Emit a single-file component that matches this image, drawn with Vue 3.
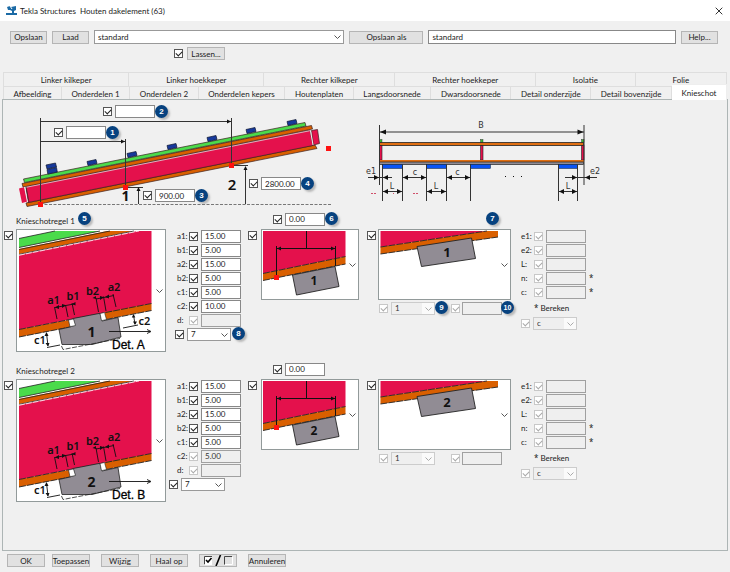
<script setup>
import { reactive } from 'vue'

const topTabs = ['Linker kilkeper', 'Linker hoekkeper', 'Rechter kilkeper', 'Rechter hoekkeper', 'Isolatie', 'Folie']
const bottomTabs = [
  'Afbeelding', 'Onderdelen 1', 'Onderdelen 2', 'Onderdelen kepers', 'Houtenplaten',
  'Langsdoorsnede', 'Dwarsdoorsnede', 'Detail onderzijde', 'Detail bovenzijde', 'Knieschot',
]
const activeTab = 'Knieschot'

const roofFields = reactive([
  { key: 'd2', value: '', badge: 2 },
  { key: 'd1', value: '', badge: 1 },
  { key: 'h1', value: '900.00', badge: 3 },
  { key: 'h2', value: '2800.00', badge: 4 },
])

const blocks = [[92, 163], [132, 155], [172, 147], [212, 139], [251, 131], [292, 123]]

const sections = reactive([
  {
    n: 1, detail: 'Det. A', offset: '0.00',
    fields: [
      { name: 'a1', value: '15.00', on: true },
      { name: 'b1', value: '5.00', on: true },
      { name: 'a2', value: '15.00', on: true },
      { name: 'b2', value: '5.00', on: true },
      { name: 'c1', value: '5.00', on: true },
      { name: 'c2', value: '10.00', on: true },
      { name: 'd', value: '', on: false },
    ],
    badges: true,
  },
  {
    n: 2, detail: 'Det. B', offset: '0.00',
    fields: [
      { name: 'a1', value: '15.00', on: true },
      { name: 'b1', value: '5.00', on: true },
      { name: 'a2', value: '15.00', on: true },
      { name: 'b2', value: '5.00', on: true },
      { name: 'c1', value: '5.00', on: true },
      { name: 'c2', value: '5.00', on: false },
      { name: 'd', value: '', on: false },
    ],
    badges: false,
  },
])

const spacing = [
  { name: 'e1', star: false },
  { name: 'e2', star: false },
  { name: 'L', star: false },
  { name: 'n', star: true },
  { name: 'c', star: true },
]
</script>

<template>
  <div class="dialog">
    <header class="title">
      <svg class="logo" width="12" height="11" viewBox="0 0 12 11" aria-hidden="true">
        <path d="M1 2l3-1 1 1 5-1v4l-2 1v2H6V6L4 5H2z" fill="#1b6aa5" />
        <path d="M4 1l2 3" stroke="#fff" stroke-width="1" />
        <rect x="0" y="8" width="11" height="2" fill="#1b6aa5" />
      </svg>
      <h1>Tekla Structures&nbsp; Houten dakelement (63)</h1>
      <button class="close" aria-label="Sluiten">
        <svg width="8" height="8" viewBox="0 0 8 8"><path d="M.7.7l6.600 6.600M7.300.7L.7 7.300" stroke="#333" stroke-width="1" /></svg>
      </button>
    </header>

    <div class="tools">
      <button class="btn">Opslaan</button>
      <button class="btn">Laad</button>
      <span class="drop wide">
        <select aria-label="Instelling"><option>standard</option></select>
        <svg class="chev" viewBox="0 0 7 4"><path d="M.5.5l3 3 3-3" /></svg>
      </span>
      <button class="btn saveas">Opslaan als</button>
      <input class="field name" type="text" aria-label="Opslaan als" value="standard">
      <button class="btn">Help...</button>
    </div>
    <div class="weld">
      <input type="checkbox" aria-label="Lassen" checked>
      <button class="btn">Lassen...</button>
    </div>

    <nav class="tabs">
      <div class="tabrow">
        <button v-for="t in topTabs" :key="t" class="tab">{{ t }}</button>
      </div>
      <div class="tabrow">
        <button v-for="t in bottomTabs" :key="t" class="tab" :class="{ active: t === activeTab }">{{ t }}</button>
      </div>
    </nav>

    <main class="panel">
      <div class="figures">
        <div class="roof">
          <svg width="342" height="110" viewBox="3 100 342 110" aria-hidden="true">
            <g stroke="#3a2020" stroke-width=".7">
              <path d="M26 203L315 145L317 148.500L27 206.500z" fill="#d95f00" />
              <path d="M26 186.500L310 130L313 145.500L28 202.500z" fill="#e4114c" />
              <path d="M22 183.500L311.500 125.500L312.500 129L23 187z" fill="#d95f00" />
              <path d="M23.500 179L305 122.500L306 126L24.500 182.500z" fill="#4bdb4b" />
            </g>
            <path d="M25 187.500L311 130.500" stroke="#ddd" stroke-width=".8" />
            <path d="M19 188.500L24.500 187L27.500 201.500L22 203z" fill="#e4114c" />
            <path d="M24.500 187L27.500 202" stroke="#eee" />
            <path d="M26 187L29 202" stroke="#3a2020" stroke-width=".7" />
            <path d="M311.500 130.500L317.500 129.500L319.500 143.500L313.500 145z" fill="#e4114c" stroke="#3a2020" stroke-width=".7" />
            <path d="M310.500 131L313 145" stroke="#eee" />
            <g fill="#17399b" stroke="#101830" stroke-width=".7">
              <path d="M46 165L55.500 163L56.500 167L47 169z" />
              <path d="M47 169.500L56.500 167.500L57.300 172L47.800 174z" />
              <path v-for="(b, i) in blocks" :key="i" :d="`M${b[0] - 5} ${b[1] - 1.5}l9-2l1 4l-9 2z`" />
            </g>
            <path d="M40 204.500H331" stroke="#777" stroke-width="1" stroke-dasharray="3 1.500" />
            <g stroke="#333" stroke-width="1" fill="none">
              <path d="M40.500 118V204M40 121.500H231M40 141.500H125M125.500 139V187M231.500 118V165" />
              <path d="M138.500 188V204M126 187.500H143M245.500 167V204M232 165.500H248" />
            </g>
            <g fill="#111">
              <path d="M231 121.500l-4-2v4zM125 141.500l-4-2v4zM138.500 187l-2 4h4zM245.500 166l-2 4h4z" />
            </g>
            <g fill="#f11">
              <rect x="38" y="202" width="5" height="5" /><rect x="123" y="185" width="5" height="5" />
              <rect x="229" y="163" width="5" height="5" /><rect x="326" y="146" width="5" height="5" />
            </g>
            <text class="num" x="125.500" y="201" font-size="14">1</text>
            <text class="num semi" x="232" y="190" font-size="15">2</text>
          </svg>
          <div v-for="f in roofFields" :key="f.key" class="over" :class="f.key">
            <input type="checkbox" :aria-label="'Maat ' + f.badge" checked>
            <input v-model="f.value" class="field" type="text" :aria-label="'Waarde ' + f.badge">
            <span class="badge">{{ f.badge }}</span>
          </div>
        </div>

        <svg class="cross" width="245" height="110" viewBox="360 100 245 110" aria-hidden="true">
          <g fill="#e4114c" stroke="#222" stroke-width=".6">
            <rect x="379.500" y="145" width="2.500" height="15" /><rect x="480.500" y="145" width="2.500" height="15" /><rect x="581.500" y="145" width="2.500" height="15" />
          </g>
          <g fill="#38b838" stroke="#222" stroke-width=".4">
            <rect x="379.500" y="139.500" width="2.500" height="3" /><rect x="480.500" y="139.500" width="2.500" height="3" /><rect x="581.500" y="139.500" width="2.500" height="3" />
          </g>
          <rect x="379.500" y="142.500" width="204" height="3" fill="#e06f12" stroke="#222" stroke-width=".8" />
          <rect x="379" y="160" width="205" height="2" fill="#e06f12" />
          <rect x="379.500" y="162" width="204" height="2.500" fill="#918c94" stroke="#222" stroke-width=".7" />
          <g fill="#0a54f5" stroke="#123" stroke-width=".5">
            <rect x="382.500" y="164.500" width="20" height="4" /><rect x="426.500" y="164.500" width="20" height="4" />
            <rect x="470.500" y="164.500" width="20" height="4" /><rect x="558.500" y="164.500" width="19" height="4" />
          </g>
          <g stroke="#333" stroke-width="1">
            <path d="M379.500 125V185M584 125V185M380 132H584" />
            <path d="M382.500 165V201M402.500 165V201M426.500 165V201M446.500 165V201M470.500 165V201M558.500 165V201M577.500 165V201" />
            <path d="M403 177.500H426M447 177.500H470M383 191.500H402M427 191.500H446M559 191.500H577M368 177.500H392M565 177.500H597" />
          </g>
          <g fill="#111">
            <path d="M380 132l6-2.500v5zM583.500 132l-6-2.500v5z" />
            <path d="M403 177.500l5-2.500v5zM426 177.500l-5-2.500v5zM447 177.500l5-2.500v5zM470 177.500l-5-2.500v5z" />
            <path d="M383 191.500l5-2.500v5zM402 191.500l-5-2.500v5zM427 191.500l5-2.500v5zM446 191.500l-5-2.500v5zM559 191.500l5-2.500v5zM577 191.500l-5-2.500v5z" />
            <path d="M379 177.500l-5-2.500v5zM383 177.500l5-2.500v5zM577 177.500l-5-2.500v5zM585 177.500l5-2.500v5z" />
            <rect x="505" y="176" width="1" height="1" /><rect x="513" y="176" width="1" height="1" /><rect x="521" y="176" width="1" height="1" />
          </g>
          <path d="M371 193.500h2M374 193.500h2M393 193.500h1M413 193.500h2M416 193.500h2" stroke="#d0506a" />
          <g class="dim">
            <text x="481" y="128">B</text>
            <text x="371" y="174">e1</text>
            <text x="415" y="175">c</text>
            <text x="457.500" y="175">c</text>
            <text x="392" y="189">L</text>
            <text x="436" y="189">L</text>
            <text x="568" y="189">L</text>
            <text x="595" y="174">e2</text>
          </g>
        </svg>
      </div>

      <section v-for="s in sections" :key="s.n" class="rule">
        <div class="part">
          <div class="head">
            <h2>Knieschotregel {{ s.n }}</h2>
            <span v-if="s.badges" class="badge b5">5</span>
          </div>
          <div class="pick pick-a">
            <input type="checkbox" :aria-label="'Detail regel ' + s.n" checked>
            <button class="picture" aria-haspopup="listbox" :aria-label="'Kies detail ' + s.n">
              <svg width="138" height="121" viewBox="17 230 138 121">
                <path d="M19 255L137 231H151.500V303.500L19 329.500z" fill="#e4114c" />
                <path d="M19 238.500L55 231H100L19 247.500z" fill="#4bdb4b" />
                <path d="M19 249L107 231H133L19 254z" fill="#d95f00" />
                <path d="M19 238.500L55 231M19 247.500L100 231M19 249.500L110 231M19 254.300L134 231" stroke="#222" stroke-width=".8" fill="none" />
                <path d="M19 255.300L139 231" stroke="#fff" stroke-width=".8" stroke-dasharray="6 1" />
                <path d="M19 329.500L71 319.500V327L19 337z" fill="#d95f00" />
                <path d="M105 312L151.500 303.500V310.500L105 319.500z" fill="#d95f00" />
                <path d="M19 337L70 327M106 319.500L151.500 310.500M19 329.500L151.500 303.500" stroke="#222" stroke-width=".9" stroke-dasharray="7 1" />
                <path d="M59 329.500L70 327L75 325L73 318.500L100 313.300L102 321L118 317.500L121 337L92 344.500L62 344.500z" fill="#918c94" stroke="#222" stroke-width=".8" />
                <path d="M61.500 346L63 349.500L120 338.500" stroke="#222" stroke-width=".8" stroke-dasharray="5 1.500" fill="none" />
                <path d="M68.500 320L73.500 319L75.500 325.500L70 326.700z" fill="#fff" stroke="#222" stroke-width=".6" />
                <path d="M100 313.500L104.500 312.500L106.500 319.500L101.500 320.700z" fill="#fff" stroke="#222" stroke-width=".6" />
                <g stroke="#111" stroke-width=".9" fill="none">
                  <path d="M54.500 307L57 319M65.500 305L68 317M72 303L74.500 315M55 307.500L74 304" />
                  <path d="M96 298L98.500 312M103.500 296.500L106 311M113 294L116 307M96 299L114 295.500" />
                  <path d="M46.500 333L48 346M47 347.500L60 345" />
                  <path v-if="s.n === 1" d="M133.500 315L135 324M123 328L138 325" />
                  <path d="M109 331.500H150M147 329.500L151 331.500L147 333.500" />
                </g>
                <g fill="#111">
                  <path d="M55 307.500l4-2.500v4zM66 305.300l-4-1.300v4zM72 304l3.500-2v3.500zM96 299l-3.500-1 3.500-2zM104 297.300l-4-1.300v4zM105 297l4-2.500v4z" />
                  <path d="M46.500 332l-2 4h4zM48 346.500l-2.500-3.500h4z" />
                  <path v-if="s.n === 1" d="M133.500 314l-1.700 3.500h3.500zM135 325l-2-3.500h4z" />
                </g>
                <g class="lbl">
                  <text x="53.500" y="303.500">a1</text>
                  <text x="73" y="300">b1</text>
                  <text x="92.500" y="294.500">b2</text>
                  <text x="114" y="291">a2</text>
                  <text x="40" y="344">c1</text>
                  <text v-if="s.n === 1" x="144.500" y="325">c2</text>
                </g>
                <text class="num" x="91.500" y="337" font-size="14">{{ s.n }}</text>
                <text class="det" x="112" y="349">{{ s.detail }}</text>
              </svg>
              <svg class="chev" viewBox="0 0 7 4"><path d="M.5.5l3 3 3-3" /></svg>
            </button>
          </div>
        </div>

        <div class="part fields">
          <div v-for="f in s.fields" :key="f.name" class="row">
            <label :for="`${f.name}-${s.n}`">{{ f.name }}:</label>
            <input type="checkbox" :aria-label="f.name" checked :disabled="!f.on">
            <input :id="`${f.name}-${s.n}`" v-model="f.value" class="field" type="text" :disabled="!f.on">
          </div>
          <div class="row bolt" :class="{ shifted: s.n === 2 }">
            <input type="checkbox" aria-label="Type" checked>
            <span class="drop">
              <select aria-label="Type"><option>7</option></select>
              <svg class="chev" viewBox="0 0 7 4"><path d="M.5.5l3 3 3-3" /></svg>
            </span>
            <span v-if="s.badges" class="badge b8">8</span>
          </div>
        </div>

        <div class="part">
          <div class="head offset">
            <input type="checkbox" aria-label="Verschuiving" checked>
            <input v-model="s.offset" class="field" type="text" aria-label="Verschuiving waarde">
            <span v-if="s.badges" class="badge b6">6</span>
          </div>
          <div class="pick pick-b">
            <input type="checkbox" aria-label="Referentie" checked>
            <button class="picture" aria-haspopup="listbox" aria-label="Kies referentie">
              <svg width="85" height="69" viewBox="262 230 85 69">
                <path d="M263 231H345.500V256.500L263 273.500z" fill="#e4114c" />
                <path d="M263 273.500L345.500 256.500V264L263 280.500z" fill="#d95f00" />
                <path d="M263 273.500L345.500 256.500M263 280.500L345.500 264" stroke="#222" stroke-width=".9" stroke-dasharray="7 1" />
                <path d="M292.500 275L335 266.500L339 286.500L296.500 295z" fill="#918c94" stroke="#222" stroke-width=".9" />
                <path d="M276.500 246V276M335.500 246V266M277 248.500H335M306.500 231V248" stroke="#111" stroke-width="1" />
                <path d="M277 248.500l4-2v4zM335 248.500l-4-2v4z" fill="#111" />
                <rect x="274" y="275" width="5" height="5" fill="#f11" />
                <text class="num" x="314" y="285" font-size="12">{{ s.n }}</text>
              </svg>
              <svg class="chev" viewBox="0 0 7 4"><path d="M.5.5l3 3 3-3" /></svg>
            </button>
          </div>
        </div>

        <div class="part">
          <div class="head"><span v-if="s.badges" class="badge b7">7</span></div>
          <div class="pick pick-c">
            <input type="checkbox" aria-label="Positie" checked>
            <button class="picture" aria-haspopup="listbox" aria-label="Kies positie">
              <svg width="120" height="69" viewBox="379 230 120 69">
                <path d="M380.500 231H487L380.500 247z" fill="#e4114c" />
                <path d="M380.500 247L487 231H498V237L380.500 254z" fill="#d95f00" />
                <path d="M380.500 247L487 231M380.500 254L498 237" stroke="#222" stroke-width=".9" stroke-dasharray="7 1" />
                <path d="M417 246.500L471.500 238L475.500 258.500L421.500 266.500z" fill="#918c94" stroke="#222" stroke-width=".9" />
                <text class="num" x="447" y="257" font-size="13">{{ s.n }}</text>
              </svg>
              <svg class="chev" viewBox="0 0 7 4"><path d="M.5.5l3 3 3-3" /></svg>
            </button>
          </div>
          <div class="row under">
            <input type="checkbox" aria-label="Aantal" checked disabled>
            <span class="drop off">
              <select aria-label="Aantal" disabled><option>1</option></select>
              <svg class="chev" viewBox="0 0 7 4"><path d="M.5.5l3 3 3-3" /></svg>
            </span>
            <span v-if="s.badges" class="badge b9">9</span>
            <input class="second" type="checkbox" aria-label="Afstand" checked disabled>
            <input class="field" type="text" aria-label="Afstand waarde" disabled>
            <span v-if="s.badges" class="badge b10">10</span>
          </div>
        </div>

        <div class="part spacing">
          <div v-for="f in spacing" :key="f.name" class="row">
            <label :for="`s-${f.name}-${s.n}`">{{ f.name }}:</label>
            <input type="checkbox" :aria-label="f.name" checked disabled>
            <input :id="`s-${f.name}-${s.n}`" class="field" type="text" disabled>
            <span v-if="f.star" class="star">*</span>
          </div>
          <p class="calc"><span class="star">*</span> Bereken</p>
          <div class="row">
            <input type="checkbox" aria-label="Bereken" checked disabled>
            <span class="drop off">
              <select aria-label="Bereken" disabled><option>c</option></select>
              <svg class="chev" viewBox="0 0 7 4"><path d="M.5.5l3 3 3-3" /></svg>
            </span>
          </div>
        </div>
      </section>
    </main>

    <footer class="actions">
      <div class="pair">
        <button class="btn">OK</button>
        <button class="btn">Toepassen</button>
      </div>
      <button class="btn">Wijzig</button>
      <button class="btn">Haal op</button>
      <button class="btn" aria-label="Alles aan of uit">
        <svg width="30" height="11" viewBox="0 0 30 11">
          <path d="M1.500 9.500V1.500H9" fill="#fff" stroke="#444" />
          <path d="M2 2H9V9H2z" fill="#fff" /><path d="M1.500 9.500H9" stroke="#fff" />
          <path d="M3 5l2 2 3.500-4" stroke="#000" stroke-width="1.600" fill="none" />
          <path d="M13 11L17.500 0" stroke="#000" stroke-width="1.600" />
          <path d="M21.500 9.500V1.500H29" fill="none" stroke="#444" /><path d="M22 9.500H29.500V2" fill="none" stroke="#fff" />
        </svg>
      </button>
      <button class="btn">Annuleren</button>
    </footer>
  </div>
</template>

<style>
body { background: #f0f0f0; }
</style>

<style scoped>
.dialog {
  display: flex;
  flex-direction: column;
  min-height: 100vh;
  box-sizing: border-box;
  padding-bottom: 5px;
  background: #f0f0f0;
  color: #1c1c1c;
  font: 8px/12px Lato, "Open Sans", sans-serif;
}
.dialog * { box-sizing: border-box; }
button, input, select { font: inherit; color: inherit; margin: 0; }
h1, h2, p { font: inherit; margin: 0; }
svg { display: block; flex: none; }

.title {
  display: flex;
  align-items: center;
  height: 21px;
  padding: 0 7px 0 6px;
  background: #fff;
}
.title h1 { flex: 1; margin-left: 2px; }
.close { padding: 0; border: 0; background: none; }

.btn {
  display: flex;
  align-items: center;
  justify-content: center;
  width: 38px;
  height: 13px;
  flex: none;
  padding: 0;
  border: 1px solid #b5b5b5;
  background: #e1e1e1;
  line-height: 10px;
  white-space: nowrap;
}
.field {
  width: 40px;
  height: 13px;
  padding: 0 3px;
  border: 1px solid #888;
  border-radius: 0;
  background: #fff;
  line-height: 10px;
}
.field:disabled { background: #efefef; border-color: #a0a0a0; color: #333; }

input[type="checkbox"] {
  appearance: none;
  flex: none;
  width: 9px;
  height: 9px;
  border: 1px solid #555;
  background: #fff;
  display: grid;
  place-items: center;
}
input[type="checkbox"]:checked::before {
  content: "";
  width: 5px;
  height: 3px;
  margin-bottom: 1px;
  border: solid #222;
  border-width: 0 0 1px 1px;
  transform: rotate(-45deg);
}
input[type="checkbox"]:disabled { border-color: #c8c8c8; }
input[type="checkbox"]:disabled::before { border-color: #aaa; }

.drop { position: relative; display: flex; width: 44px; }
.drop select {
  appearance: none;
  width: 100%;
  height: 13px;
  padding: 0 12px 0 3px;
  border: 1px solid #999;
  border-radius: 0;
  background: #fff;
  line-height: 10px;
}
.drop .chev { position: absolute; right: 3px; top: 5px; }
.drop.off select {
  opacity: 1;
  border-color: #ccc;
  color: #333;
  background: linear-gradient(to left, #fafafa 12px, #efefef 12px);
}
.chev { width: 7px; height: 4px; fill: none; stroke: #555; stroke-width: 1; }
.off .chev { stroke: #aaa; }

.tools { display: flex; align-items: center; gap: 5px; padding: 9px 12px 0 10px; }
.tools .btn { width: 37px; }
.tools .saveas { width: 74px; }
.tools .wide { flex: 255; }
.tools .wide select, .tools .name { height: 14px; }
.tools .name { flex: 244; min-width: 0; }
.weld { display: flex; align-items: center; gap: 4px; padding: 3px 0 0 174px; }

.tabs { margin: 12px 3px 0; }
.tabrow { display: flex; height: 14px; }
.tab {
  flex: 1 1 auto;
  padding: 0 2px;
  border: solid #dedede;
  border-width: 1px 1px 0 0;
  background: #f0f0f0;
  line-height: 12px;
  white-space: nowrap;
}
.tab:first-child { border-left-width: 1px; }
.tab.active { position: relative; height: 16px; margin-top: -2px; background: #fff; border-color: #eee; }

.panel {
  flex: 1;
  margin: -1px 2px 0;
  border: 1px solid #adb5b5;
}
.figures { display: flex; gap: 15px; height: 110px; }
.roof { position: relative; }
.over { position: absolute; display: flex; align-items: center; gap: 3px; }
.over .badge { margin-left: -3px; }
.d2 { left: 100px; top: 5px; }
.d1 { left: 51px; top: 26px; }
.h1 { left: 140px; top: 89px; }
.h2 { left: 246px; top: 77px; }

.badge {
  display: flex;
  flex: none;
  align-items: center;
  justify-content: center;
  width: 13px;
  height: 13px;
  border-radius: 50%;
  background: #07427f;
  color: #fff;
  font: bold 8px/13px "Liberation Sans", sans-serif;
  box-shadow: 2px 2px 2px #8888;
}
.b5, .b6, .b7, .b8, .b9, .b10 { position: absolute; }
.b5 { left: 75px; top: 2px; }
.b6 { left: 77px; top: 2px; }
.b7 { left: 119px; top: 2px; }
.b8 { left: 57px; top: 0; }
.b9 { left: 56px; top: 0; }
.b10 { left: 122px; top: 0; font-size: 7px; }

.rule {
  display: grid;
  grid-template-columns: 163px 82px 119px 154px auto;
  height: 150px;
}
.head { position: relative; height: 19px; }
.part:first-child .head { padding: 5px 0 0 13px; }
.offset { display: flex; align-items: center; gap: 3px; padding: 0 0 1px 25px; }
.pick { display: flex; justify-content: space-between; align-items: flex-start; }
.pick > input { margin-top: 2px; }
.pick-a { width: 162px; margin-left: 1px; }
.pick-b { width: 111px; }
.pick-c { width: 144px; }
.picture {
  display: flex;
  align-items: center;
  justify-content: space-between;
  padding: 0 2px 0 0;
  border: 1px solid #929a9a;
  background: #fff;
}
.pick-a .picture { width: 150px; }
.pick-b .picture { width: 98px; }
.pick-c .picture { width: 133px; }

.row { position: relative; display: flex; align-items: center; gap: 3px; height: 14px; }
.fields { padding-top: 19px; }
.fields label { width: 9px; margin-left: 11px; white-space: nowrap; }
.bolt { width: 67px; margin-left: 9px; }
.bolt.shifted { margin-left: 3px; }
.under { margin: 1px 0 0 12px; }
.under .second { margin-left: 13px; }
.under .field { margin-left: -1px; }
.spacing { padding-top: 19px; }
.spacing label { width: 10px; white-space: nowrap; }
.star { font-family: "Noto Sans", sans-serif; }
.calc { height: 17px; padding: 3px 0 0 13px; }

.actions { display: flex; gap: 11px; padding: 3px 7px 0; }
.pair { display: flex; gap: 7px; }

.num { font-family: "Noto Sans", sans-serif; font-weight: 700; text-anchor: middle; fill: #111; }
.semi { font-weight: 600; }
.lbl { font: 600 11px "Noto Sans", sans-serif; text-anchor: middle; fill: #111; }
.det { font: 12px "Liberation Sans", sans-serif; fill: #000; stroke: #000; stroke-width: .3px; }
.dim { font: 8px "DejaVu Sans", sans-serif; text-anchor: middle; fill: #333; }
</style>
